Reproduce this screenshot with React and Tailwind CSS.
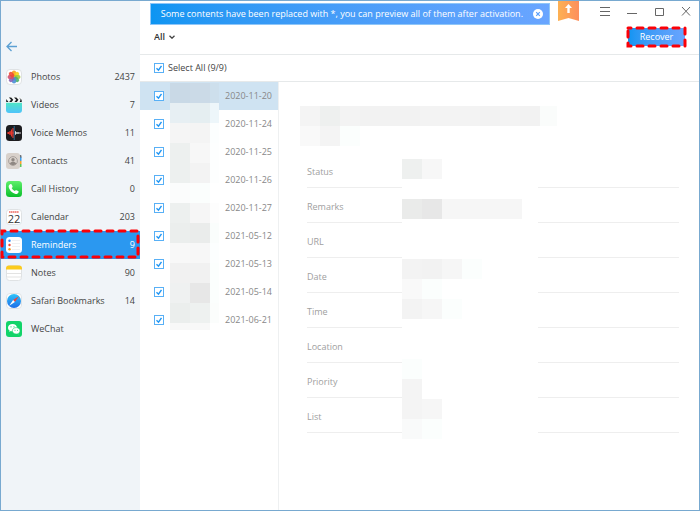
import { useState } from "react";
import { clsx } from "clsx";

function PhotosIcon() {
  const petals = ["#f7a11b", "#f6d21c", "#9fcb3b", "#4fb36b", "#4a8fd6", "#8a63b5", "#d2506f", "#ee4a35"];
  return (
    <svg viewBox="0 0 16 16" className="size-4">
      <rect x=".5" y=".5" width="15" height="15" rx="3.5" fill="#fff" stroke="#dfe2e4" />
      {petals.map((fill, i) => (
        <rect key={fill} x="5.900" y="1.500" width="4.200" height="6.300" rx="2.100" fill={fill} opacity=".9" transform={`rotate(${i * 45} 8 8)`} />
      ))}
    </svg>
  );
}

function VideosIcon() {
  return (
    <svg viewBox="0 0 16 16" className="size-4">
      <defs>
        <linearGradient id="videos" x1="0" y1="0" x2="0" y2="1">
          <stop offset="0" stopColor="#4fe6c4" />
          <stop offset="1" stopColor="#4fc3fb" />
        </linearGradient>
      </defs>
      <path d="M0 5.500h16V13a3 3 0 0 1-3 3H3a3 3 0 0 1-3-3z" fill="url(#videos)" />
      <path d="M0 5.500V3a3 3 0 0 1 3-3h10a3 3 0 0 1 3 3v2.500z" fill="#f7fafa" />
      <path d="M.2 2 2.500 5H.2zM2.800.6h2.400L7.300 2.800 5.600 5H3.200L5 2.800zM8 .6h2.400l2.100 2.200L10.800 5H8.400l1.800-2.200zM13 .4l2.600 2.400L15.800 5h-2.200l1-2.200z" fill="#1d1f22" />
    </svg>
  );
}

function VoiceIcon() {
  return (
    <svg viewBox="0 0 16 16" className="size-4">
      <rect width="16" height="16" rx="3.5" fill="#1c1c1f" />
      <path d="M2.500 7v2M4 6v4M5.500 4.500v7M7 3v10" stroke="#e8392f" strokeWidth="1.200" />
      <path d="M1 8h7" stroke="#e8392f" />
      <path d="M9.500 6.200v3.600M11 7v2M12.500 7.500v1M9 8h6" stroke="#e9e9ea" strokeWidth=".9" />
      <path d="M8.200 1v14" stroke="#2f83b8" strokeWidth=".8" />
    </svg>
  );
}

function ContactsIcon() {
  return (
    <svg viewBox="0 0 16 16" className="size-4">
      <path d="M13 2h1.500a1 1 0 0 1 1 1v2H13z" fill="#6c7076" />
      <path d="M13 4.500h2.500V8H13z" fill="#3aa0f0" />
      <path d="M13 8h2.500v3H13z" fill="#f9a02c" />
      <path d="M13 11h2.500v3H13z" fill="#5cc75a" />
      <rect width="14" height="16" rx="3" fill="#d8d1cb" />
      <circle cx="7" cy="8" r="4.400" fill="none" stroke="#9d9691" strokeWidth=".8" />
      <circle cx="7" cy="6.700" r="1.700" fill="#8f8883" />
      <path d="M3.900 10.800c.5-1.500 1.700-2 3.100-2s2.600.5 3.100 2A4.400 4.400 0 0 1 7 12.300a4.400 4.400 0 0 1-3.100-1.500z" fill="#8f8883" />
    </svg>
  );
}

function CallIcon() {
  return (
    <svg viewBox="0 0 16 16" className="size-4">
      <defs>
        <linearGradient id="call" x1="0" y1="0" x2="0" y2="1">
          <stop offset="0" stopColor="#5ff06b" />
          <stop offset="1" stopColor="#0bbf2c" />
        </linearGradient>
      </defs>
      <rect width="16" height="16" rx="3.5" fill="url(#call)" />
      <path d="M4.600 3c.5-.2.900 0 1.100.5l.8 1.700c.2.500.1.900-.2 1.200l-.7.600c.7 1.300 1.700 2.300 3.100 3.100l.7-.7c.3-.3.700-.3 1.100-.1l1.600.8c.5.300.7.800.4 1.200-.5 1.300-1.600 2-2.800 1.700-3.300-.8-6.300-3.800-7-7-.3-1.300.6-2.500 1.900-3z" fill="#fff" />
    </svg>
  );
}

function CalendarIcon() {
  return (
    <svg viewBox="0 0 16 16" className="size-4">
      <rect x=".5" y=".5" width="15" height="15" rx="3" fill="#fff" stroke="#dfe2e4" />
      <path d="M3 3h10" stroke="#ee6a62" strokeWidth="1.500" strokeDasharray="1.500 .4" />
      <text x="8" y="13.500" textAnchor="middle" fontSize="11" fontFamily="Open Sans, sans-serif" fill="#333">22</text>
    </svg>
  );
}

function RemindersIcon() {
  return (
    <svg viewBox="0 0 16 16" className="size-4">
      <rect width="16" height="16" rx="3.5" fill="#fff" />
      <circle cx="3.500" cy="3.700" r="1.200" fill="#2f8df5" />
      <circle cx="3.500" cy="8" r="1.200" fill="#f0483e" />
      <circle cx="3.500" cy="12.300" r="1.200" fill="#f59a23" />
      <path d="M6 3.500h8M6 6.500h8M6 9.500h8M6 12.500h8" stroke="#e9e9ec" strokeWidth=".7" />
    </svg>
  );
}

function NotesIcon() {
  return (
    <svg viewBox="0 0 16 16" className="size-4">
      <rect x=".5" y=".5" width="15" height="15" rx="3" fill="#fff" stroke="#dfe2e4" />
      <path d="M0 4.500V3.500A3 3 0 0 1 3 .5h10a3 3 0 0 1 3 3v1z" fill="#fbcb1e" />
      <path d="M1 8.500h14M1 12h14" stroke="#dcdcda" strokeWidth=".8" />
    </svg>
  );
}

function SafariIcon() {
  return (
    <svg viewBox="0 0 16 16" className="size-4">
      <defs>
        <linearGradient id="safari" x1="0" y1="0" x2="0" y2="1">
          <stop offset="0" stopColor="#2fc4fa" />
          <stop offset="1" stopColor="#1d6de8" />
        </linearGradient>
      </defs>
      <rect x=".5" y=".5" width="15" height="15" rx="3.5" fill="#fff" stroke="#dfe2e4" />
      <circle cx="8" cy="8" r="7" fill="url(#safari)" />
      <path d="M12.800 3.200 8.900 8.900 7.100 7.100z" fill="#f0413a" />
      <path d="M3.200 12.800 7.100 7.100l1.800 1.800z" fill="#fff" />
    </svg>
  );
}

function WeChatIcon() {
  return (
    <svg viewBox="0 0 16 16" className="size-4">
      <rect width="16" height="16" rx="3" fill="#12d469" />
      <path d="M6.500 3C4 3 2 4.600 2 6.700c0 1.200.6 2.200 1.600 2.900l-.4 1.300 1.600-.8c.5.200 1.100.3 1.700.3 2.500 0 4.500-1.600 4.500-3.700S9 3 6.500 3z" fill="#fff" />
      <path d="M10.200 6.600c-2.200 0-3.900 1.400-3.900 3.200S8 13 10.200 13c.5 0 .9-.1 1.300-.2l1.400.7-.4-1.200c.9-.6 1.500-1.500 1.500-2.500 0-1.800-1.700-3.200-3.800-3.200z" fill="#fff" stroke="#12d469" strokeWidth=".6" />
      <circle cx="5" cy="5.800" r=".6" fill="#12d469" />
      <circle cx="8" cy="5.800" r=".6" fill="#12d469" />
      <circle cx="9" cy="9.200" r=".5" fill="#12d469" />
      <circle cx="11.500" cy="9.200" r=".5" fill="#12d469" />
    </svg>
  );
}

const CATEGORIES = [
  { name: "Photos", count: 2437, Icon: PhotosIcon },
  { name: "Videos", count: 7, Icon: VideosIcon },
  { name: "Voice Memos", count: 11, Icon: VoiceIcon },
  { name: "Contacts", count: 41, Icon: ContactsIcon },
  { name: "Call History", count: 0, Icon: CallIcon },
  { name: "Calendar", count: 203, Icon: CalendarIcon },
  { name: "Reminders", count: 9, Icon: RemindersIcon },
  { name: "Notes", count: 90, Icon: NotesIcon },
  { name: "Safari Bookmarks", count: 14, Icon: SafariIcon },
  { name: "WeChat", count: null, Icon: WeChatIcon },
];

const DATES = [
  "2020-11-20",
  "2020-11-24",
  "2020-11-25",
  "2020-11-26",
  "2020-11-27",
  "2021-05-12",
  "2021-05-13",
  "2021-05-14",
  "2021-06-21",
];

const FIELDS = ["Status", "Remarks", "URL", "Date", "Time", "Location", "Priority", "List"];

// Censored blocks, one array per 20px row
const LIST_BLOCKS = [
  ["bg-[#c9d9e6]", "bg-[#cbdae7]", "bg-[#cddfec]"],
  ["bg-[#e7eff3]", "bg-[#e5eef1]", "bg-[#edf6fa]"],
  ["bg-[#f5f5f5]", "bg-[#f4f4f4]", "bg-[#fcfefe]"],
  ["bg-[#edf0ef]", "bg-[#f7f7f7]", "bg-[#fdfefe]"],
  ["bg-[#edf0ef]", "bg-[#f3f3f3]", "bg-[#fdfefe]"],
  ["bg-[#fbfcfc]", "bg-[#fbfefd]", "bg-white"],
  ["bg-[#edf0ef]", "bg-[#f6f6f6]", "bg-[#fdfdfd]"],
  ["bg-[#ebeeed]", "bg-[#eaeceb]", "bg-[#fafdfc]"],
  ["bg-[#f8f8f8]", "bg-[#f7f7f7]", "bg-[#fcfefe]"],
  ["bg-[#f1f1f1]", "bg-[#f1f1f1]", "bg-[#fbfefd]"],
  ["bg-[#eff1f1]", "bg-[#e7e7e7]", "bg-[#fbfefd]"],
  ["bg-[#ebeeed]", "bg-[#eef1f0]", "bg-[#fbfdfc]"],
  ["bg-[#f8f8f8]", "bg-[#f8f8f8]"],
];

const TITLE_BLOCKS = [
  [
    "bg-[#f4f4f4]", "bg-[#eef0ef]", "bg-[#f3f3f3]", "bg-[#f2f2f2]", "bg-[#f2f2f2]", "bg-[#f2f2f2]", "bg-[#f3f3f3]",
    "bg-[#f3f3f3]", "bg-[#f3f3f3]", "bg-[#f2f2f2]", "bg-[#f3f3f3]", "bg-[#f2f2f2]", "bg-[#fafcfb]",
  ],
  ["bg-[#f9f9f9]", "bg-[#f4f4f4]", "bg-[#fbfefd]"],
];

const VALUE_BLOCKS = [
  ["bg-[#eef0ef]", "bg-[#f7f7f7]"],
  [],
  ["bg-[#eaebea]", "bg-[#e7e7e7]", "bg-[#f6f6f6]", "bg-[#f6f6f6]", "bg-[#f6f6f6]", "bg-[#f6f6f6]"],
  [],
  [],
  ["bg-[#f3f3f3]", "bg-[#f2f2f2]", "bg-[#f6f6f6]", "bg-[#fbfefd]"],
  ["bg-[#f9f9f9]", "bg-[#fbfefd]"],
  ["bg-[#f3f3f3]", "bg-[#f6f6f6]", "bg-[#fbfefd]"],
  [],
  [],
  ["bg-[#fbfefd]"],
  ["bg-[#f4f4f4]"],
  ["bg-[#f4f4f4]", "bg-[#f6f6f6]"],
  ["bg-[#f9fafa]", "bg-[#fbfefd]"],
];

function Blocks({ rows, className }) {
  return (
    <div aria-hidden="true" className={clsx("overflow-hidden", className)}>
      {rows.map((row, y) => (
        <div key={y} className="flex h-5">
          {row.map((color, x) => (
            <span key={x} className={clsx("w-5 shrink-0", color)} />
          ))}
        </div>
      ))}
    </div>
  );
}

// Red dashed callout drawn over its parent, on a box 3px smaller than its outer edge
function Callout({ className }) {
  return (
    <svg aria-hidden="true" className={clsx("pointer-events-none absolute overflow-visible", className)}>
      <rect width="100%" height="100%" fill="none" stroke="#fb0007" strokeWidth="3" strokeLinecap="round" strokeDasharray="6 6" strokeDashoffset="3" />
    </svg>
  );
}

function Checkbox({ label, text, checked, onChange }) {
  return (
    <label className="flex items-center gap-1">
      <span className="grid size-[10px] shrink-0">
        <input
          type="checkbox"
          aria-label={label}
          checked={checked}
          onChange={onChange}
          className="col-start-1 row-start-1 size-[10px] appearance-none border border-[#58b0f6] bg-white"
        />
        {checked && (
          <svg viewBox="0 0 10 10" className="pointer-events-none col-start-1 row-start-1 size-[10px]">
            <path d="M2.500 5.200 4.500 7.200 7.500 2.800" fill="none" stroke="#2196f3" strokeWidth="1.400" />
          </svg>
        )}
      </span>
      {text}
    </label>
  );
}

function Sidebar() {
  return (
    <aside className="flex w-[139px] shrink-0 flex-col bg-[#f0f4f8]">
      <div className="flex h-[62px] items-end px-[5px] pb-[10px]">
        <button aria-label="Back">
          <svg viewBox="0 0 12 12" className="size-3" fill="none" stroke="#5b9fd3" strokeWidth="1.300">
            <path d="M11 5.500H1.500M5.500 1 1 5.500 5.500 10" />
          </svg>
        </button>
      </div>
      <nav>
        {CATEGORIES.map(({ name, count, Icon }) => {
          const active = name === "Reminders";
          return (
            <button
              key={name}
              className={clsx(
                "relative flex h-7 w-full items-center px-[5px] text-left",
                active ? "bg-[#2b98f0] text-white" : "text-[#444]"
              )}
            >
              <Icon />
              <span className="ml-[9px] flex-1">{name}</span>
              <span>{count}</span>
              {active && <Callout className="top-0 left-px h-[26px] w-[136px]" />}
            </button>
          );
        })}
      </nav>
    </aside>
  );
}

function TitleBar() {
  return (
    <header className="flex h-6 items-start pl-[10px]">
      <div className="mt-[2px] flex h-[22px] w-[400px] items-center justify-end border border-[#8fc6f8] bg-linear-to-r from-[#0c95f2] to-[#69a5ff] pr-[6px] text-white">
        <p className="whitespace-nowrap">
          Some contents have been replaced with *, you can preview all of them after activation.
        </p>
        <button aria-label="Close message" className="ml-[10px]">
          <svg viewBox="0 0 10 10" className="size-[10px]">
            <circle cx="5" cy="5" r="5" fill="#fff" />
            <path d="m3.200 3.200 3.600 3.600m0-3.600L3.200 6.800" stroke="#5a9ffb" strokeWidth="1.200" />
          </svg>
        </button>
      </div>
      <button aria-label="Upgrade" className="ml-2">
        <svg viewBox="0 0 21 20" className="h-5 w-[21px]">
          <defs>
            <linearGradient id="ribbon">
              <stop offset="0" stopColor="#fdb153" />
              <stop offset="1" stopColor="#fd8f5c" />
            </linearGradient>
          </defs>
          <path d="M0 0h21v20l-10.500-3L0 20z" fill="url(#ribbon)" />
          <path d="M10.500 3 14 7h-2.300v5H9.300V7H7z" fill="#fff" />
        </svg>
      </button>
      <div className="mt-1 mr-[7px] ml-auto flex gap-[15px]">
        <button aria-label="Menu">
          <svg viewBox="0 0 12 12" className="size-3" stroke="#666">
            <path d="M1 2.500h10M1 6.500h10M1 10.500h10" />
          </svg>
        </button>
        <button aria-label="Minimize">
          <svg viewBox="0 0 12 12" className="size-3" stroke="#666">
            <path d="M1 8.500h10" />
          </svg>
        </button>
        <button aria-label="Maximize">
          <svg viewBox="0 0 12 12" className="size-3" fill="none" stroke="#666">
            <path d="M2.500 3.500h8v7h-8z" />
          </svg>
        </button>
        <button aria-label="Close">
          <svg viewBox="0 0 12 12" className="size-3" stroke="#666">
            <path d="m2 2 8 8.500m0-8.500-8 8.500" />
          </svg>
        </button>
      </div>
    </header>
  );
}

function Toolbar() {
  return (
    <div className="flex h-[30px] items-center justify-between border-b border-[#e6e9ea] pr-3 pb-[5px] pl-[14px]">
      <div className="flex items-center text-[#333]">
        <select aria-label="Filter" className="appearance-none bg-transparent pr-1 font-semibold">
          <option>All</option>
        </select>
        <svg viewBox="0 0 6 4" className="h-1 w-[6px]" fill="none" stroke="#444" strokeWidth="1.300">
          <path d="M.5.700 3 3.200 5.500.7" />
        </svg>
      </div>
      <div className="relative flex h-[22px] w-[61px] p-[2px]">
        <button className="flex-1 rounded-xs bg-linear-to-r from-[#0c95f2] to-[#69a5ff] text-white">Recover</button>
        <Callout className="top-[2px] left-[2px] h-[18px] w-[57px]" />
      </div>
    </div>
  );
}

function ReminderList({ checked, onToggle }) {
  return (
    <div className="relative w-[139px] shrink-0 border-r border-[#eef0f1]">
      <ul>
        {DATES.map((date, i) => (
          <li
            key={date}
            className={clsx("flex h-7 items-center justify-between pr-[6px] pl-[14px]", i === 0 && "bg-[#cfe3f2]")}
          >
            <Checkbox label={`Reminder ${date}`} checked={checked[i]} onChange={() => onToggle(i)} />
            <time className="text-[#888]">{date}</time>
          </li>
        ))}
      </ul>
      <Blocks rows={LIST_BLOCKS} className="absolute top-px left-[30px] h-[247px] w-[49px]" />
    </div>
  );
}

function Detail() {
  return (
    <section className="flex-1 pt-6 pr-5 pl-[21px]">
      <Blocks rows={TITLE_BLOCKS} className="w-[257px]" />
      <div className="relative mt-[7px] ml-[7px]">
        <dl className="text-[#a0a0a0]">
          {FIELDS.map((field) => (
            <div key={field} className="flex h-[35px] items-center border-b border-[#eee] pt-1">
              <dt>{field}</dt>
            </div>
          ))}
        </dl>
        <Blocks rows={VALUE_BLOCKS} className="absolute top-[6px] left-[95px] w-[136px] bg-white" />
      </div>
    </section>
  );
}

export default function App() {
  const [checked, setChecked] = useState(DATES.map(() => true));
  const total = checked.filter(Boolean).length;

  const toggle = (i) => setChecked(checked.map((c, n) => (n === i ? !c : c)));

  return (
    <div className="flex min-h-screen border border-[#78a9d0] bg-white font-['Open_Sans',sans-serif] text-[9px] leading-3">
      <Sidebar />
      <main className="flex min-w-0 flex-1 flex-col">
        <TitleBar />
        <Toolbar />
        <div className="flex h-[27px] items-center border-b border-[#e6e9ea] pl-[14px] text-[#444]">
          <Checkbox
            text={`Select All (${total}/${DATES.length})`}
            checked={total === DATES.length}
            onChange={() => setChecked(DATES.map(() => total !== DATES.length))}
          />
        </div>
        <div className="flex flex-1">
          <ReminderList checked={checked} onToggle={toggle} />
          <Detail />
        </div>
      </main>
    </div>
  );
}
